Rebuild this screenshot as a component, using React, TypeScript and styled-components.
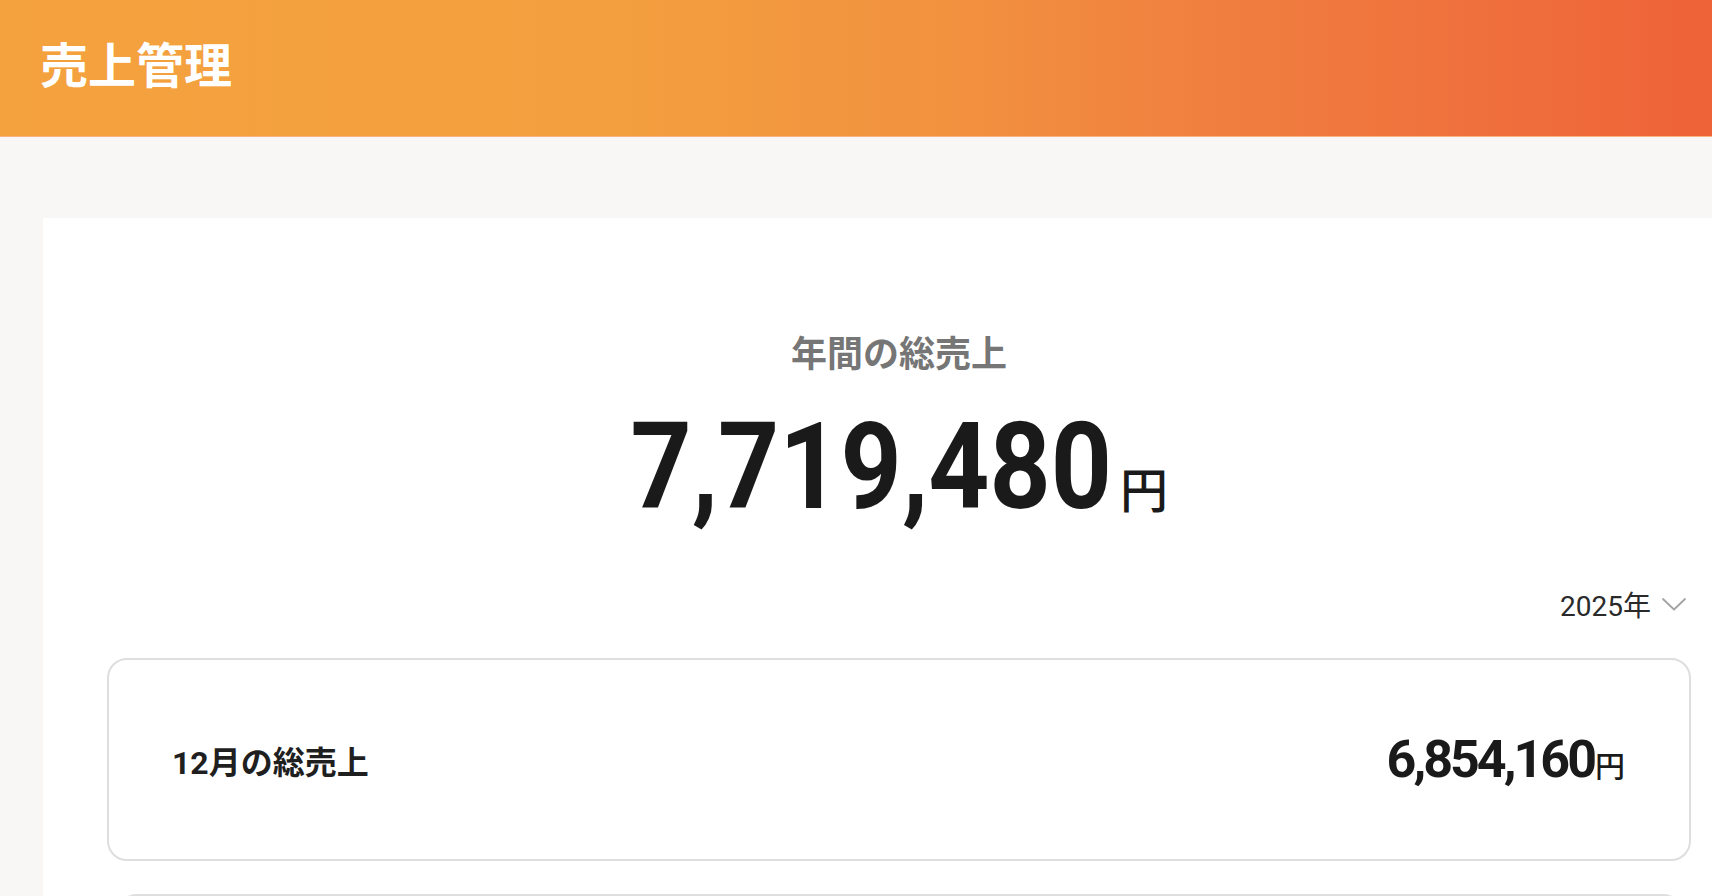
import styled, { createGlobalStyle } from "styled-components";

const GlobalStyle = createGlobalStyle`
  html, body {
    margin: 0;
    padding: 0;
    background: #f9f7f6;
    overflow-x: hidden;
  }
  * {
    box-sizing: border-box;
  }
  body {
    font-family: Roboto, "Noto Sans CJK JP", sans-serif;
    color: #1c1c1c;
  }
`;

const months = [
  { label: "12月の総売上", amount: 6854160 },
  { label: "11月の総売上", amount: 865320 },
];

const yen = (n: number) => n.toLocaleString("ja-JP");

function App() {
  return (
    <>
      <GlobalStyle />
      <Header>
        <PageTitle>売上管理</PageTitle>
      </Header>
      <Main>
        <Card>
          <Hero>
            <HeroLabel>年間の総売上</HeroLabel>
            <HeroAmount>
              <BigNumber>{yen(7719480)}</BigNumber>
              <BigUnit>円</BigUnit>
            </HeroAmount>
          </Hero>
          <YearRow>
            <YearText>2025年</YearText>
            <svg width="24" height="13" viewBox="0 0 24 13" fill="none">
              <polyline
                points="1,1 12,11.5 23,1"
                stroke="#a3a3a3"
                strokeWidth="1.8"
                strokeLinecap="round"
                strokeLinejoin="round"
              />
            </svg>
          </YearRow>
          <MonthList>
            {months.map((m, i) => (
              <MonthBox key={m.label} inset={i > 0}>
                <MonthLabel>{m.label}</MonthLabel>
                <MonthAmount>
                  <SmallNumber>{yen(m.amount)}</SmallNumber>
                  <SmallUnit>円</SmallUnit>
                </MonthAmount>
              </MonthBox>
            ))}
          </MonthList>
        </Card>
      </Main>
    </>
  );
}

export default App;

const Header = styled.header`
  height: 137px;
  display: flex;
  align-items: center;
  padding: 0 0 12px 40px;
  background: linear-gradient(
    90deg,
    #f4a23e 0%,
    #f39f3f 35%,
    #f2923f 55%,
    #f07e3f 72%,
    #ef6e3c 88%,
    #ee6238 100%
  );
  border-bottom: 1px solid #f6b37f;
`;

const PageTitle = styled.h1`
  margin: 0;
  color: #ffffff;
  font-family: "Noto Sans CJK JP", sans-serif;
  font-size: 48px;
  font-weight: 700;
`;

const Main = styled.main`
  padding: 81px 0 0 43px;
`;

const Card = styled.section`
  width: 1712px;
  min-height: 900px;
  background: #ffffff;
  padding: 111px 64px 40px 64px;
`;

const Hero = styled.div`
  display: flex;
  flex-direction: column;
  align-items: center;
`;

const HeroLabel = styled.h2`
  margin: 0;
  font-family: "Noto Sans CJK JP", sans-serif;
  font-size: 36px;
  line-height: 44px;
  font-weight: 700;
  color: #767676;
`;

const HeroAmount = styled.div`
  display: flex;
  align-items: baseline;
  margin-top: 34px;
  line-height: 1;
  height: 120px;
`;

const BigNumber = styled.span`
  display: inline-block;
  font-family: Roboto, sans-serif;
  font-size: 120px;
  font-weight: 700;
  color: #1a1a1a;
  transform: scaleX(0.89);
  transform-origin: right center;
  margin-left: -59px;
`;

const BigUnit = styled.span`
  font-family: "Noto Sans CJK JP", sans-serif;
  font-size: 48px;
  font-weight: 500;
  color: #1a1a1a;
  margin-left: 8px;
`;

const YearRow = styled.div`
  display: flex;
  justify-content: flex-end;
  align-items: center;
  gap: 11px;
  margin-top: 61px;
  padding-right: 5px;
  height: 32px;
`;

const YearText = styled.span`
  font-size: 28px;
  color: #2a2a2a;
`;

const MonthList = styled.div`
  display: flex;
  flex-direction: column;
  gap: 33px;
  margin-top: 38px;
`;

const MonthBox = styled.div<{ inset?: boolean }>`
  height: 203px;
  margin: 0 ${(p) => (p.inset ? "8px 0 10px" : "0")};
  border: 2px solid #dedede;
  border-radius: 20px;
  display: flex;
  align-items: center;
  justify-content: space-between;
  padding: 0 64px 0 63px;
`;

const MonthLabel = styled.span`
  font-size: 32px;
  font-weight: 700;
  color: #1f1f1f;
`;

const MonthAmount = styled.span`
  display: flex;
  align-items: baseline;
`;

const SmallNumber = styled.span`
  font-family: Roboto, sans-serif;
  font-size: 52px;
  font-weight: 700;
  letter-spacing: -3px;
  color: #1a1a1a;
`;

const SmallUnit = styled.span`
  font-family: "Noto Sans CJK JP", sans-serif;
  font-size: 30px;
  font-weight: 500;
  margin-left: 1px;
  color: #1a1a1a;
`;
